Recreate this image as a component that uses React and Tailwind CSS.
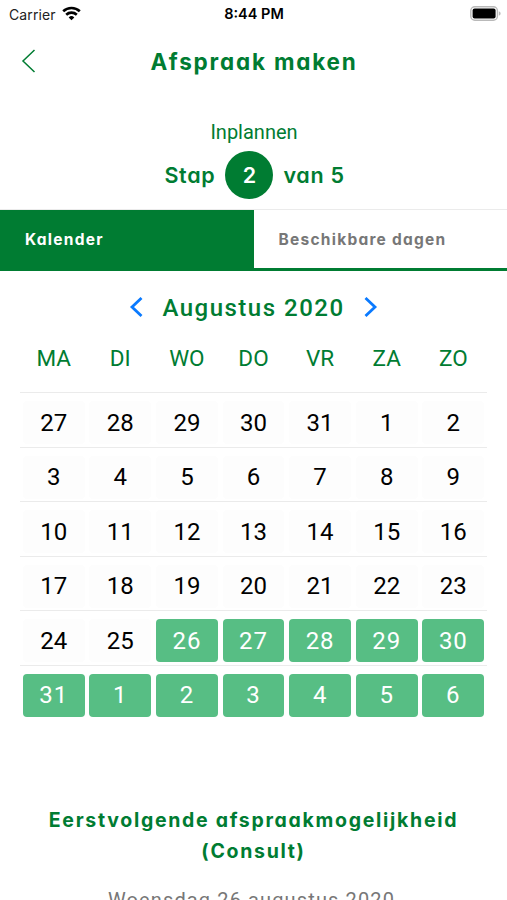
import React, { useState } from "react"

const dayNames = ["MA", "DI", "WO", "DO", "VR", "ZA", "ZO"]

const weeks = [
    [27, 28, 29, 30, 31, 1, 2],
    [3, 4, 5, 6, 7, 8, 9],
    [10, 11, 12, 13, 14, 15, 16],
    [17, 18, 19, 20, 21, 22, 23],
    [24, 25, 26, 27, 28, 29, 30],
    [31, 1, 2, 3, 4, 5, 6],
]

// Days are available from the 26th of August onwards
const isAvailable = (week, day) => week * 7 + day >= 30

function StatusBar() {
    return (
        <div className="grid h-[28px] grid-cols-3 items-center pl-[9px] pr-[6px] font-['Inter',sans-serif] text-[14.5px] text-[#222]">
            <div className="flex items-center gap-[6px]">
                <span className="text-[14px] tracking-[0.1px]">Carrier</span>
                <svg width="19" height="15" viewBox="0 0 19 15" fill="none" stroke="#000" strokeWidth="2.6" className="-mt-[2px]">
                    <path d="M1.2 5.3a12 12 0 0 1 16.6 0" />
                    <path d="M4.2 8.7a7.7 7.7 0 0 1 10.6 0" />
                    <path d="M9.5 14.2 6.7 11.4a4 4 0 0 1 5.6 0Z" fill="#000" stroke="none" />
                </svg>
            </div>
            <div className="-ml-[2px] text-center font-semibold text-black">8:44 PM</div>
            <svg width="31" height="15" viewBox="0 0 31 15" className="-mt-[2px] justify-self-end">
                <rect x="0.8" y="0.8" width="26.6" height="13.4" rx="4" fill="#fff" stroke="#b9b9b9" strokeWidth="1.4" />
                <rect x="2.6" y="2.6" width="23" height="9.8" rx="2" fill="#000" />
                <path d="M28.8 5.2c1.3.6 1.8 1.3 1.8 2.3s-.5 1.7-1.8 2.3Z" fill="#b9b9b9" />
            </svg>
        </div>
    )
}

export default function App() {
    const [tab, setTab] = useState("kalender")

    return (
        <div className="h-[900px] w-[507px] overflow-hidden bg-white font-['Roboto',sans-serif] text-[#007c32]">
            <StatusBar />

            {/* Header */}
            <header className="grid h-[68px] grid-cols-[60px_1fr_60px] items-center">
                <button className="-mt-[2px] pl-[21px]" aria-label="Terug">
                    <svg width="15" height="24" viewBox="0 0 15 24" fill="none" stroke="currentColor" strokeWidth="1.5">
                        <path d="M13.5 1 2 12l11.5 11" />
                    </svg>
                </button>
                <h1 className="whitespace-nowrap pl-px text-center font-['Inter',sans-serif] text-[22.5px] font-bold tracking-[1.8px] [font-feature-settings:'cv11']">
                    Afspraak maken
                </h1>
            </header>

            {/* Step */}
            <div className="flex h-[113px] flex-col items-center pt-[24px]">
                <p className="pl-px text-[20px] leading-[24px]">Inplannen</p>
                <div className="mt-[7px] flex items-center gap-[10px] whitespace-nowrap pl-[2px] font-['Inter',sans-serif] text-[21.5px] font-semibold tracking-[0.7px] [font-feature-settings:'cv11']">
                    <span>Stap</span>
                    <span className="flex size-[48px] items-center justify-center rounded-full bg-[#007c32] pl-px text-white">2</span>
                    <span>van 5</span>
                </div>
            </div>

            {/* Tabs */}
            <div className="grid h-[62px] grid-cols-2 border-t border-b-[3px] border-t-[#ebebeb] border-b-[#007c32] font-['Inter',sans-serif] text-[15.5px] font-bold [font-feature-settings:'cv11']">
                <button
                    onClick={() => setTab("kalender")}
                    className={`whitespace-nowrap pl-[25px] pt-[2px] text-left tracking-[1.25px] ${tab === "kalender" ? "bg-[#007c32] text-white" : "text-[#777]"}`}
                >
                    Kalender
                </button>
                <button
                    onClick={() => setTab("dagen")}
                    className={`whitespace-nowrap pl-[25px] pt-[2px] text-left tracking-[1.25px] ${tab === "dagen" ? "bg-[#007c32] text-white" : "text-[#777]"}`}
                >
                    Beschikbare dagen
                </button>
            </div>

            {/* Month */}
            <div className="flex h-[72px] items-center justify-center gap-[19px]">
                <button className="text-[#0a7aff]" aria-label="Vorige maand">
                    <svg width="14" height="20" viewBox="0 0 14 20" fill="none" stroke="currentColor" strokeWidth="2.8">
                        <path d="M12.5 1 3 10l9.5 9" />
                    </svg>
                </button>
                <h2 className="whitespace-nowrap pt-px text-[24px] font-medium tracking-[1.5px]">Augustus 2020</h2>
                <button className="text-[#0a7aff]" aria-label="Volgende maand">
                    <svg width="14" height="20" viewBox="0 0 14 20" fill="none" stroke="currentColor" strokeWidth="2.8">
                        <path d="M1.5 1 11 10l-9.5 9" />
                    </svg>
                </button>
            </div>

            {/* Calendar */}
            <div className="mx-[20.4px]">
                <div className="grid h-[49px] grid-cols-7 pt-[2px] text-center text-[22.5px] leading-[26px]">
                    {dayNames.map((name) => (
                        <span key={name}>{name}</span>
                    ))}
                </div>
                {weeks.map((week, w) => (
                    <div key={w} className="grid h-[54.6px] grid-cols-7 border-t-[1.5px] border-[#ebebeb] pt-[8px]">
                        {week.map((day, d) => (
                            <button
                                key={d}
                                className={`mx-[2.4px] h-[43px] rounded-[4px] text-center text-[24px] ${isAvailable(w, d) ? "bg-[#57be84] tracking-[0.9px] text-white" : "bg-[#fdfdfd] text-black"}`}
                            >
                                {day}
                            </button>
                        ))}
                    </div>
                ))}
            </div>

            {/* First available appointment */}
            <div className="mt-[85px] text-center">
                <h3 className="whitespace-nowrap font-['Inter',sans-serif] text-[19.5px] font-bold leading-[31px] tracking-[1.7px] [font-feature-settings:'cv11']">
                    Eerstvolgende afspraakmogelijkheid
                    <br />
                    (Consult)
                </h3>
                <p className="mt-[19px] whitespace-nowrap pr-[4px] text-[20px] leading-[28px] tracking-[1.13px] text-[#777]">
                    Woensdag 26 augustus 2020
                </p>
            </div>
        </div>
    )
}
